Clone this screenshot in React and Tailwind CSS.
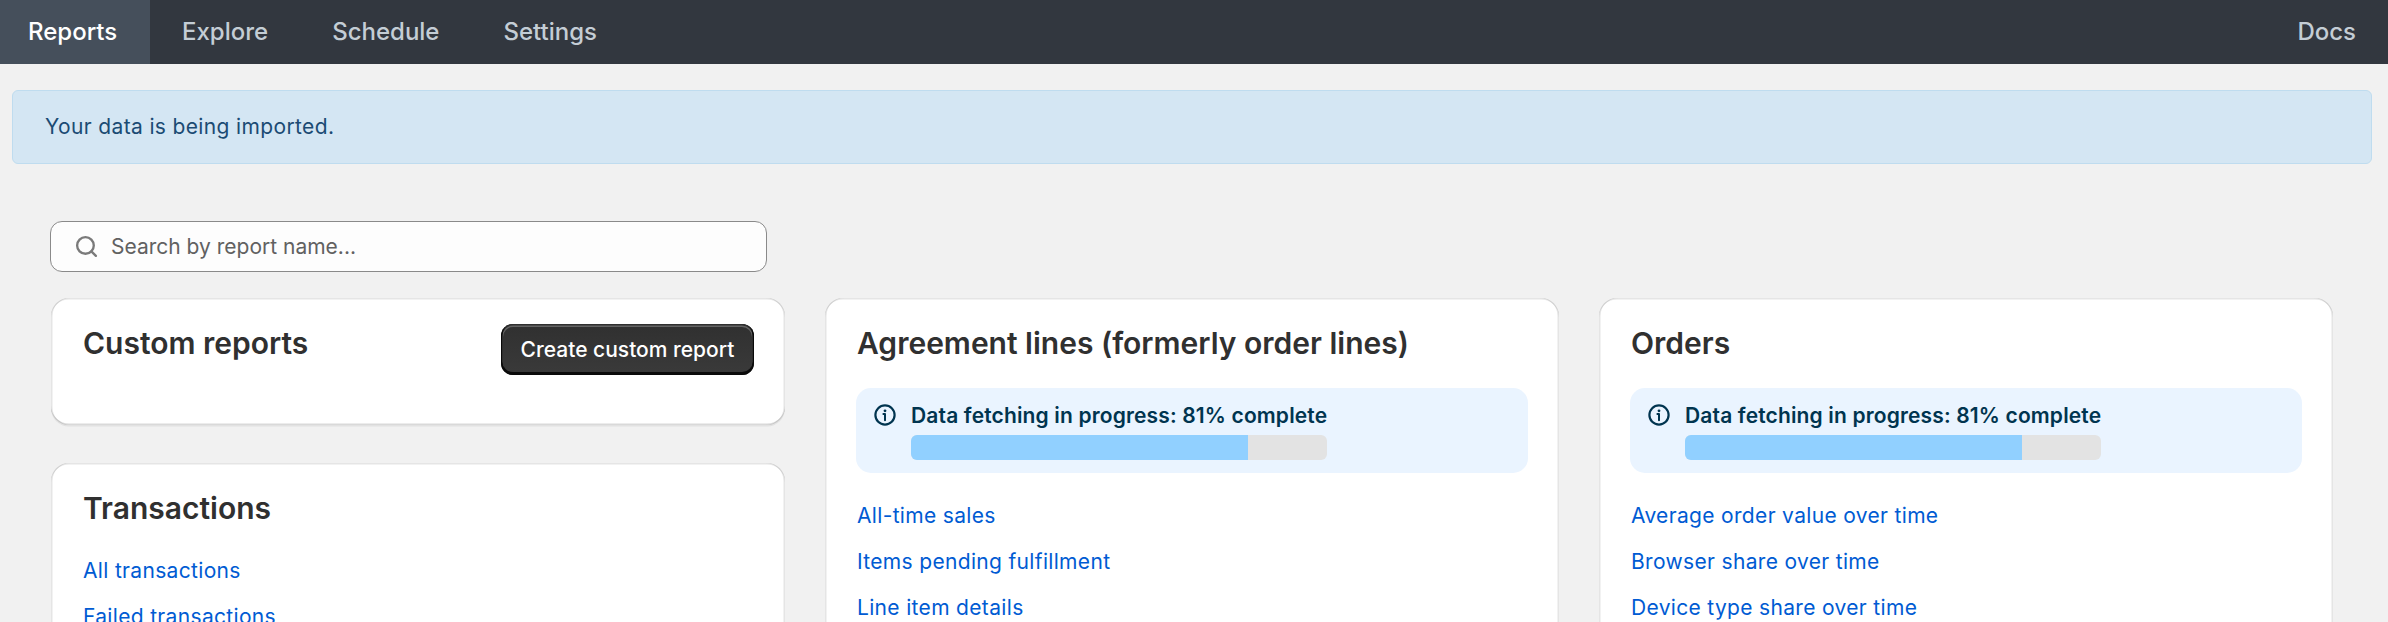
import { Search } from 'lucide-react';

const NavLink = ({ label, className }) => (
  <a className={`flex h-full items-center text-[24px] leading-none font-medium text-[#c4cdd5] ${className}`}>
    {label}
  </a>
);

const InfoIcon = () => (
  <svg viewBox="0 0 22 22" className="mt-[3px] h-[22px] w-[22px] shrink-0 text-[#00344f]" fill="none">
    <circle cx="11" cy="11" r="9.6" stroke="currentColor" strokeWidth="2.2" />
    <circle cx="11" cy="6.8" r="1.4" fill="currentColor" />
    <path d="M9.4 10h1.6v6.2" stroke="currentColor" strokeWidth="2" strokeLinecap="round" strokeLinejoin="round" />
  </svg>
);

const Progress = ({ percent }) => (
  <div className="-mx-px mt-[27px] mb-[28px] flex gap-[15px] rounded-[15px] bg-[#eaf4ff] pt-[13px] pr-[18px] pb-[13px] pl-[18px]">
    <InfoIcon />
    <div className="w-[416px]">
      <p className="text-[21px] leading-[30px] font-semibold tracking-[0.15px] whitespace-nowrap text-[#00344f]">Data fetching in progress: {percent}% complete</p>
      <div className="mt-[4px] h-[25px] overflow-hidden rounded-[6px] bg-[#e3e3e3]">
        <div className="h-full bg-[#91d0ff]" style={{ width: `${percent}%` }} />
      </div>
    </div>
  </div>
);

const Card = ({ title, action, children }) => (
  <section className="rounded-[18px] bg-white px-[32px] pt-[27px] pb-[32px] shadow-[0_1.5px_0_rgba(26,26,26,0.07),inset_1.5px_0_0_rgba(0,0,0,0.1),inset_-1.5px_0_0_rgba(0,0,0,0.1),inset_0_-1.5px_0_rgba(0,0,0,0.15),inset_0_1.5px_0_rgba(204,204,204,0.5)]">
    <div className="flex items-start justify-between">
      <h2 className="text-[30px] leading-[36px] font-semibold text-[#303030]">{title}</h2>
      {action}
    </div>
    {children}
  </section>
);

const Links = ({ items }) => (
  <ul className="flex flex-col gap-[16px]">
    {items.map((item) => (
      <li key={item}>
        <a className="block text-[21px] leading-[30px] tracking-[0.33px] text-[#005bd3]">{item}</a>
      </li>
    ))}
  </ul>
);

export default function App() {
  return (
    <div className="h-[622px] overflow-hidden bg-[#f1f1f1] font-['Inter',sans-serif]">
      <nav className="flex h-[64px] items-center justify-between bg-[#32373f]">
        <div className="flex h-full">
          <NavLink label="Reports" className="w-[150px] bg-[#454f5b] pl-[28px] text-white" />
          <NavLink label="Explore" className="px-[32px]" />
          <NavLink label="Schedule" className="px-[32px]" />
          <NavLink label="Settings" className="px-[32px]" />
        </div>
        <NavLink label="Docs" className="pr-[32px]" />
      </nav>

      <div className="mt-[26px] mr-[16px] ml-[12px] flex h-[74px] items-center rounded-[6px] border border-[#bfdcef] bg-[#d4e6f3] pl-[32px] text-[21px] tracking-[0.36px] text-[#1b4b73]">
        Your data is being imported.
      </div>

      <main className="px-[51px] pt-[57px]">
        <div className="-ml-px flex h-[51px] w-[717px] items-center gap-[12px] rounded-[12px] border-[1.5px] border-[#8a8a8a] bg-[#fdfdfd] pl-[23px] text-[21px] text-[#616161]">
          <Search size={25} strokeWidth={2.25} className="shrink-0 text-[#7a7a7a]" />
          <span>Search by report name...</span>
        </div>

        <div className="mt-[26px] grid grid-cols-[734px_734px_734px] gap-x-[40px]">
          <div className="flex flex-col gap-[38px]">
            <Card
              title="Custom reports"
              action={
                <button className="-mt-px -mr-[1px] h-[51px] w-[253px] rounded-[12px] bg-[linear-gradient(#303030,#3a3a3a)] text-[21px] font-medium text-white shadow-[inset_0_-1.5px_0_1.5px_rgba(0,0,0,0.8),inset_0_0_0_1.5px_#303030,inset_0_1px_0_2px_rgba(255,255,255,0.25)]">
                  Create custom report
                </button>
              }
            >
              <div className="h-[18px]" />
            </Card>
            <Card title="Transactions">
              <div className="mt-[30px]">
                <Links items={['All transactions', 'Failed transactions', 'Refunded transactions']} />
              </div>
            </Card>
          </div>

          <Card title="Agreement lines (formerly order lines)">
            <Progress percent={81} />
            <Links items={['All-time sales', 'Items pending fulfillment', 'Line item details', 'Sales over time']} />
          </Card>

          <Card title="Orders">
            <Progress percent={81} />
            <Links items={['Average order value over time', 'Browser share over time', 'Device type share over time', 'Orders over time']} />
          </Card>
        </div>
      </main>
    </div>
  );
}
